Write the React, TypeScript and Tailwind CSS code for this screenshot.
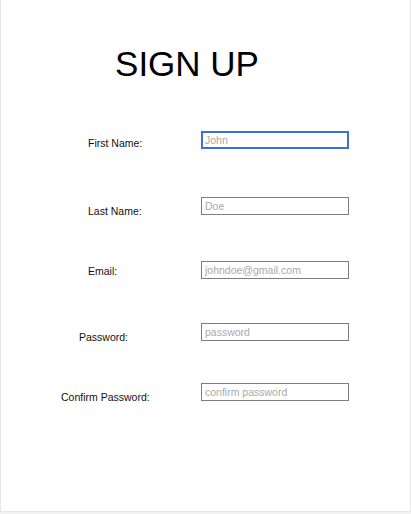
import React from 'react';

// rows of the sign up form
const fields = [
  { label: 'First Name:', placeholder: 'John', type: 'text', pad: 'pl-[87px]', labelTop: 'mt-[7px]', rowTop: 'mt-[50px]', focused: true },
  { label: 'Last Name:', placeholder: 'Doe', type: 'text', pad: 'pl-[87px]', labelTop: 'mt-[9px]', rowTop: 'mt-[48px]', focused: false },
  { label: 'Email:', placeholder: 'johndoe@gmail.com', type: 'email', pad: 'pl-[87px]', labelTop: 'mt-[5px]', rowTop: 'mt-[44px]', focused: false },
  { label: 'Password:', placeholder: 'password', type: 'password', pad: 'pl-[78px]', labelTop: 'mt-[9px]', rowTop: 'mt-[44px]', focused: false },
  { label: 'Confirm Password:', placeholder: 'confirm password', type: 'password', pad: 'pl-[60px]', labelTop: 'mt-[9px]', rowTop: 'mt-[41px]', focused: false },
];

const App: React.FC = () => {
  return (
    <div className="h-[514px] w-[411px] bg-[#f2f2f2] font-['Liberation_Sans',Arial,sans-serif] text-black">
      <div className="flex h-[512px] w-[411px] flex-col border-x border-b border-[#e6e6e6] bg-white">
        <h1 className="mt-[46px] w-[372px] text-center text-[35px] leading-none font-normal">
          SIGN UP
        </h1>

        <form className="flex flex-col">
          {fields.map((field) => (
            <div key={field.label} className={`flex items-start ${field.rowTop}`}>
              <label
                className={`w-[200px] text-[10.5px] leading-none text-[#111] ${field.pad} ${field.labelTop}`}
              >
                {field.label}
              </label>
              <input
                type={field.type}
                placeholder={field.placeholder}
                className={
                  field.focused
                    ? 'h-[18px] w-[148px] border-2 border-[#3d6fdc] bg-white px-[2px] text-[10.5px] outline-none placeholder:text-[#a9a9a9]'
                    : 'h-[18px] w-[148px] border border-[#7d7d7d] bg-white px-[3px] text-[10.5px] outline-none placeholder:text-[#a9a9a9]'
                }
              />
            </div>
          ))}
        </form>
      </div>
    </div>
  );
};

export default App;
